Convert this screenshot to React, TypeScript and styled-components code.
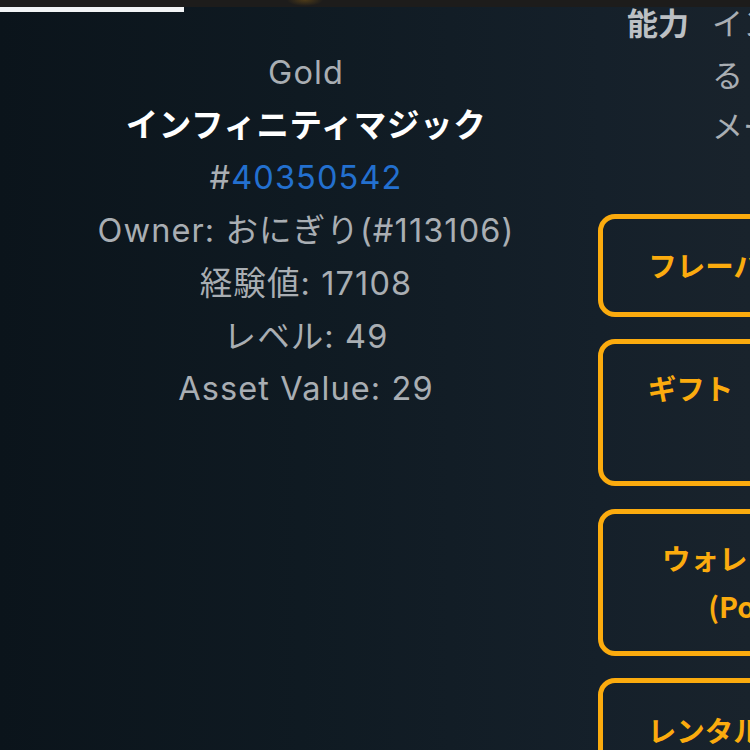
import React from "react";
import styled, { createGlobalStyle } from "styled-components";

const Global = createGlobalStyle`
  html, body { margin: 0; padding: 0; background: #0e1820; }
  body { width: 750px; height: 750px; overflow: hidden; }
`;

const Page = styled.div`
  position: relative;
  width: 750px;
  height: 750px;
  overflow: hidden;
  display: grid;
  grid-template-columns: 598px 400px;
  align-items: start;
  background: linear-gradient(90deg, #0b141b 0%, #0f1a22 40%, #15202a 80%, #19232c 100%);
  font-family: Inter, "Noto Sans CJK JP", sans-serif;
`;

const StatusBar = styled.div`
  position: absolute;
  top: 0;
  left: 0;
  right: 0;
  height: 7px;
  background: radial-gradient(ellipse 18px 6px at 305px 0, rgba(150, 105, 20, 0.4), transparent), #1d1c1b;
`;

const Progress = styled.div`
  position: absolute;
  top: 7px;
  left: 0;
  width: 184px;
  height: 5px;
  background: #f2f4f5;
`;

const Details = styled.div`
  display: flex;
  flex-direction: column;
  align-items: center;
  padding: 47px 0 0 14px;
`;

const Line = styled.div<{ $strong?: boolean }>`
  font-size: 32.5px;
  line-height: 52.7px;
  white-space: nowrap;
  letter-spacing: ${(p) => (p.$strong ? 0.6 : 1.1)}px;
  color: ${(p) => (p.$strong ? "#ffffff" : "#a9aeb3")};
  font-weight: ${(p) => (p.$strong ? 700 : 400)};
`;

const Accent = styled.span`
  color: #2370cf;
`;

const Side = styled.div`
  display: flex;
  flex-direction: column;
`;

const Ability = styled.div`
  display: grid;
  grid-template-columns: 63px 1fr;
  column-gap: 22px;
  padding-left: 29px;
  margin-top: -4px;
  font-size: 31px;
  line-height: 51.5px;
  font-family: "Noto Sans CJK JP", sans-serif;
`;

const AbilityLabel = styled.div`
  font-weight: 700;
  color: #bcc0c4;
`;

const AbilityText = styled.div`
  color: #a9aeb3;
  white-space: nowrap;
`;

const Actions = styled.div`
  display: flex;
  flex-direction: column;
  gap: 22.5px;
  margin-top: 63px;
`;

const ActionButton = styled.button<{ $tall?: boolean; $top?: boolean }>`
  box-sizing: border-box;
  width: 356px;
  height: ${(p) => (p.$tall ? 147 : 103)}px;
  padding: ${(p) => (p.$top ? "20px 0 0" : "0")};
  border: 5px solid #fbab0e;
  border-radius: 17px;
  background: transparent;
  color: #fbab0e;
  font-family: "Noto Sans CJK JP", sans-serif;
  font-weight: 700;
  font-size: 28.5px;
  line-height: 48px;
  display: flex;
  flex-direction: column;
  align-items: center;
  justify-content: ${(p) => (p.$top ? "flex-start" : "center")};
  white-space: nowrap;
`;

export default function App() {
  return (
    <>
      <Global />
      <Page>
        <Details>
          <Line>Gold</Line>
          <Line $strong>インフィニティマジック</Line>
          <Line>
            #<Accent>40350542</Accent>
          </Line>
          <Line>Owner: おにぎり(#113106)</Line>
          <Line>経験値: 17108</Line>
          <Line>レベル: 49</Line>
          <Line>Asset Value: 29</Line>
        </Details>
        <Side>
          <Ability>
            <AbilityLabel>能力</AbilityLabel>
            <AbilityText>
              インフィニティマジックを発動す
              <br />
              る
              <br />
              メーター上限が増加する
            </AbilityText>
          </Ability>
          <Actions>
            <ActionButton>
              <span>フレーバーテキスト</span>
            </ActionButton>
            <ActionButton $tall $top>
              <span>ギフト（無償譲渡）</span>
            </ActionButton>
            <ActionButton $tall>
              <span>ウォレットへ送信</span>
              <span>(Polygon)</span>
            </ActionButton>
            <ActionButton>
              <span>レンタルに出品する</span>
            </ActionButton>
          </Actions>
        </Side>
        <StatusBar />
        <Progress />
      </Page>
    </>
  );
}
